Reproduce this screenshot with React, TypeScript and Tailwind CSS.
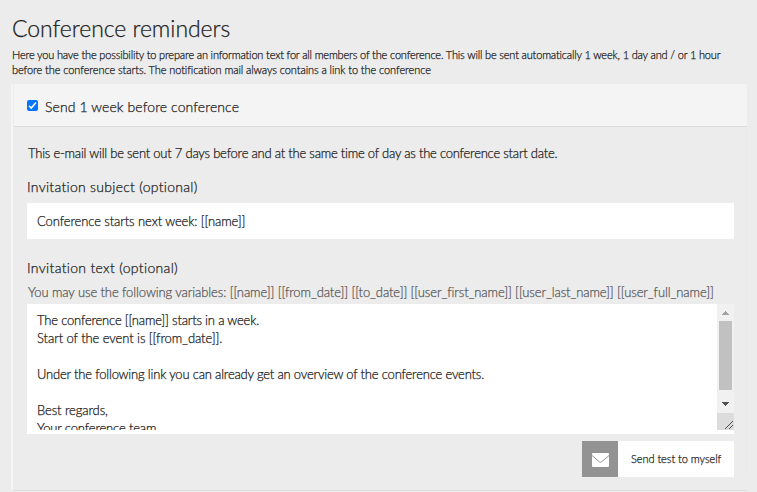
import React from 'react';

const lines = [
  'The conference [[name]] starts in a week.',
  'Start of the event is [[from_date]].',
  '',
  'Under the following link you can already get an overview of the conference events.',
  '',
  'Best regards,',
  'Your conference team',
];

const tracking = [
  'tracking-[-0.185px]',
  'tracking-[-0.08px]',
  '',
  'tracking-[-0.19px]',
  '',
  'tracking-[-0.1px]',
  'tracking-[-0.15px]',
];

function Scrollbar() {
  return (
    <div className="flex w-[17px] shrink-0 flex-col bg-[#f1f1f1]">
      <div className="flex h-[17px] items-center justify-center">
        <svg width="7" height="4" viewBox="0 0 7 4" shapeRendering="crispEdges" fill="#a3a3a3">
          <path d="M3 0h1v1h1v1h1v1h1v1H0V3h1V2h1V1h1z" />
        </svg>
      </div>
      <div className="mx-[2px] h-[69px] bg-[#c1c1c1]" />
      <div className="flex h-[23px] items-center justify-center pt-[5px]">
        <svg width="7" height="4" viewBox="0 0 7 4" shapeRendering="crispEdges" fill="#505050">
          <path d="M0 0h7v1H6v1H5v1H4v1H3V3H2V2H1V1H0z" />
        </svg>
      </div>
      <div className="flex h-[17px] items-end justify-end bg-[#dcdcdc] p-[1px]">
        <svg width="8" height="8" viewBox="0 0 8 8" shapeRendering="crispEdges" stroke="#505050">
          <path d="M0 8L8 0M4 8L8 4" />
        </svg>
      </div>
      <div className="flex-1 bg-white" />
    </div>
  );
}

export default function App() {
  return (
    <main className="flex h-[492px] w-[757px] flex-col overflow-hidden whitespace-nowrap bg-[#ececec] pl-[11px] font-['Lato','Liberation_Sans',sans-serif] text-[13px] font-light text-[#222] [-webkit-text-stroke:0.25px]">
      <h1 className="mt-[14px] h-[28px] pl-px text-[23px] leading-[28px] tracking-[-0.05px]">Conference reminders</h1>
      <div className="mt-[5px] h-[37px] pl-px text-[11px] leading-[15px]">
        <p className="tracking-[-0.17px]">
          Here you have the possibility to prepare an information text for all members of the conference. This will be sent automatically 1 week, 1 day and / or 1 hour
        </p>
        <p className="tracking-[-0.09px]">
          before the conference starts. The notification mail always contains a link to the conference
        </p>
      </div>
      <section className="h-[407px] w-[736px] border-b border-l-2 border-b-[#dfdfdf] border-l-[#f5f5f5]">
        <header className="ml-px flex h-[43px] items-center border-b border-[#dcdcdc] bg-[#f4f4f4] pl-[13px]">
          <span className="flex h-[11px] w-[11px] items-center justify-center rounded-[2px] bg-[#0075ff]">
            <svg width="9" height="9" viewBox="0 0 9 9" fill="none" stroke="#fff" strokeWidth="1.6">
              <path d="M1 4.7L3.3 7L8 1.5" />
            </svg>
          </span>
          <span className="ml-[7px] pt-[4px] text-[14px] leading-[18px] tracking-[0.1px]">Send 1 week before conference</span>
        </header>
        <div className="flex flex-col border-r border-[#e9e9e9] pl-[14px] pr-[12px]">
          <p className="mt-[17px] h-[18px] pl-px leading-[18px] tracking-[-0.22px]">
            This e-mail will be sent out 7 days before and at the same time of day as the conference start date.
          </p>
          <label className="mt-[16px] h-[19px] text-[14px] leading-[18px] tracking-[0.28px]">Invitation subject (optional)</label>
          <div className="mt-[6px] h-[36px] w-[707px] bg-white pl-[10px] leading-[37px] tracking-[-0.1px]">
            Conference starts next week: [[name]]
          </div>
          <label className="mt-[20px] h-[18px] text-[14px] leading-[18px] tracking-[0.32px]">Invitation text (optional)</label>
          <p className="mt-[6px] h-[18px] pl-px leading-[18px] tracking-[-0.095px] text-[#5a5a5a]">
            You may use the following variables: [[name]] [[from_date]] [[to_date]] [[user_first_name]] [[user_last_name]] [[user_full_name]]
          </p>
          <div className="mt-[3px] flex h-[130px] w-[707px] bg-white">
            <div className="mt-[7px] h-[119px] flex-1 overflow-hidden pl-[10px]">
              {lines.map((line, i) => (
                <div key={i} className="h-[18px] leading-[18px]">
                  <span className={tracking[i]}>{line}</span>
                </div>
              ))}
            </div>
            <Scrollbar />
          </div>
          <button className="mt-[7px] flex h-[36px] w-[152px] self-end bg-white">
            <span className="flex h-[36px] w-[36px] items-center justify-center bg-[#939393] pt-[2px]">
              <svg width="17" height="14" viewBox="0 0 17 14">
                <rect width="17" height="14" rx="1" fill="#fff" />
                <path d="M0 2.5L7.4 8.8Q8.5 9.7 9.6 8.8L17 2.5" fill="none" stroke="#939393" />
              </svg>
            </span>
            <span className="pl-[13px] text-[11px] leading-[35px] tracking-[-0.05px]">Send test to myself</span>
          </button>
        </div>
      </section>
    </main>
  );
}
